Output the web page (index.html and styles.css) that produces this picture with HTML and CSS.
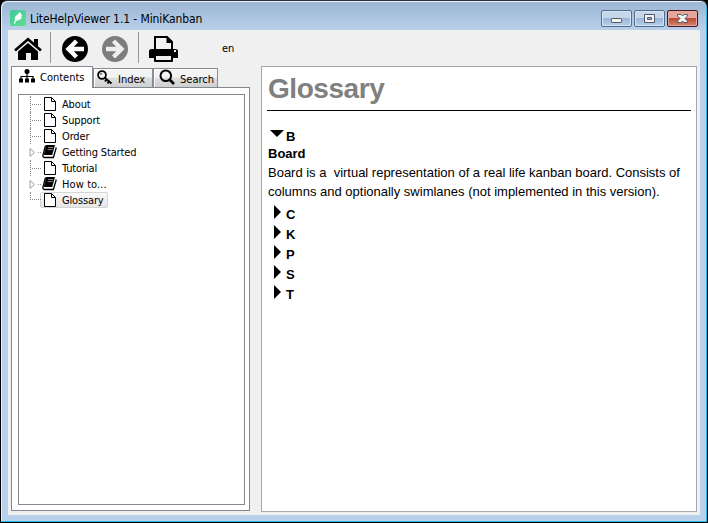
FILE: index.html
```html
<!DOCTYPE html>
<html lang="en">
<head>
<meta charset="utf-8">
<title>LiteHelpViewer 1.1 - MiniKanban</title>
<link rel="stylesheet" href="styles.css">
</head>
<body>
<svg class="defs" width="0" height="0" aria-hidden="true">
  <symbol id="page" viewBox="0 0 12 14"><path d="M.5 .5H7.5L11.5 4.5V13.5H.5Z" fill="#fff" stroke="#000"/><path d="M7.5 .5V4.5H11.5" fill="none" stroke="#000"/></symbol>
  <symbol id="book" viewBox="0 0 15 14"><path d="M4.2 0H13L10.2 10H1.8Z"/><path d="M3.5 .5L.8 10.8Q.8 12.5 2.5 12.5H11.4L14.3 2.5" fill="none" stroke="#000" stroke-width="1.3"/><path d="M6.2 2.5H11.2M5.6 4.6H10.6" stroke="#aaa" stroke-width=".8"/></symbol>
</svg>
<div class="window">
  <header class="titlebar">
    <svg class="logo" width="16" height="16" viewBox="0 0 16 16"><defs><linearGradient id="g" x2="1" y2="1"><stop stop-color="#43c6a0"/><stop offset="1" stop-color="#62df8c"/></linearGradient></defs><rect width="16" height="16" rx="2" fill="url(#g)"/><path d="M4 14L5 10Q4 7 7 5L10 2L11 4L12 5L11 7L12 8L9 10L6 11L5 14Z" fill="#fff"/></svg>
    <h1 class="title">LiteHelpViewer 1.1 - MiniKanban</h1>
    <div class="controls">
      <button class="control"><svg width="29" height="15" viewBox="0 0 29 15"><rect x="9.5" y="7.5" width="10" height="4" rx=".7" fill="#f4f4f4" stroke="#535666"/></svg></button>
      <button class="control"><svg width="29" height="15" viewBox="0 0 29 15"><path d="M9.5 3.5H19.5V11.5H9.5ZM12.5 6.5V8.5H16.5V6.5Z" fill="#f4f4f4" fill-rule="evenodd" stroke="#535666"/></svg></button>
      <button class="control close"><svg width="29" height="15" viewBox="0 0 29 15"><path d="M9.5 3.5H13L14.5 5L16 3.5H19.5V5L17 7.5L19.5 10V11.5H16L14.5 10L13 11.5H9.5V10L12 7.5L9.5 5Z" fill="#f4f4f4" stroke="#535666"/></svg></button>
    </div>
  </header>
  <main class="client">
    <nav class="toolbar">
      <svg class="home" width="28" height="24" viewBox="0 0 28 24"><path d="M1 13.5L14 2.2L27 13.5" fill="none" stroke="#000" stroke-width="2.6"/><path d="M20 2H24V10L20 7ZM4 14.5L14 6L24 14.5V23H17V16H12V23H4Z"/></svg>
      <i class="divider"></i>
      <svg class="back" width="26" height="26" viewBox="0 0 26 26"><circle cx="13" cy="13" r="13"/><path d="M14.5 5L6.5 13L14.5 21M7 13H22" fill="none" stroke="#fff" stroke-width="4.4"/></svg>
      <svg class="forward" width="26" height="26" viewBox="0 0 26 26"><circle cx="13" cy="13" r="13" fill="#7d7d7d"/><path d="M11.5 5L19.5 13L11.5 21M19 13H4" fill="none" stroke="#eee" stroke-width="4.4"/></svg>
      <i class="divider second"></i>
      <svg class="print" width="29" height="26" viewBox="0 0 29 26"><path d="M6 14V1H18L23 6V14" fill="#f3f3f3" stroke="#000" stroke-width="2"/><path d="M17.5 1H19L24 6V7H17.5Z"/><path d="M0 15Q0 13 3 13H26Q29 13 29 15V22H24V25Q24 26 23 26H6Q5 26 5 25V22H0Z"/><path d="M7 20H22V24H7Z" fill="#eee"/><rect x="25" y="14" width="2" height="2" fill="#eee"/></svg>
      <span class="lang">en</span>
    </nav>
    <div class="columns">
      <aside class="sidebar">
        <div class="tabs">
          <div class="tab active"><svg width="16" height="14" viewBox="0 0 16 14"><circle cx="8" cy="2.5" r="2.5"/><path d="M0 9.5H4V13.5H0ZM6 9.5H10V13.5H6ZM12 9.5H16V13.5H12Z"/><path d="M8 4V10M2 10V7.5H14V10" fill="none" stroke="#000" stroke-width="1.2"/></svg><span>Contents</span></div>
          <div class="tab index"><svg width="16" height="15" viewBox="0 0 16 15"><circle cx="5" cy="5" r="3.9" fill="none" stroke="#000" stroke-width="1.8"/><circle cx="4" cy="4" r=".8"/><path d="M7.5 7.5L14.5 13.5M9.5 9.5L8 11.5M12 11.5L10.5 13.5" fill="none" stroke="#000" stroke-width="1.9"/></svg><span>Index</span></div>
          <div class="tab search"><svg width="16" height="16" viewBox="0 0 16 16"><circle cx="6.8" cy="6.8" r="5.3" fill="none" stroke="#000" stroke-width="2"/><path d="M10.5 10.5L15 15" stroke="#000" stroke-width="2.6"/></svg><span>Search</span></div>
        </div>
        <div class="panel">
          <ul class="tree">
            <li><i class="branch"></i><span class="node"><svg class="page"><use href="#page"/></svg><span>About</span></span></li>
            <li><i class="branch"></i><span class="node"><svg class="page"><use href="#page"/></svg><span>Support</span></span></li>
            <li><i class="branch"></i><span class="node"><svg class="page"><use href="#page"/></svg><span>Order</span></span></li>
            <li><svg class="expander" viewBox="0 0 12 16"><path d="M1 4.5L5.5 8.5L1 12.5Z" fill="#fff" stroke="#a0a0a0"/><path d="M9 8.5H12" stroke="#888" stroke-dasharray="1 1"/></svg><span class="node"><svg class="book"><use href="#book"/></svg><span>Getting Started</span></span></li>
            <li><i class="branch"></i><span class="node"><svg class="page"><use href="#page"/></svg><span>Tutorial</span></span></li>
            <li><svg class="expander" viewBox="0 0 12 16"><path d="M1 4.5L5.5 8.5L1 12.5Z" fill="#fff" stroke="#a0a0a0"/><path d="M9 8.5H12" stroke="#888" stroke-dasharray="1 1"/></svg><span class="node"><svg class="book"><use href="#book"/></svg><span class="howto">How to...</span></span></li>
            <li><i class="branch last"></i><span class="node selected"><svg class="page"><use href="#page"/></svg><span>Glossary</span></span></li>
          </ul>
        </div>
      </aside>
      <article class="document">
        <h2>Glossary</h2>
        <div class="letter open"><svg width="14" height="8" viewBox="0 0 14 8"><path d="M0 0H14L7 7Z"/></svg><b>B</b></div>
        <h3>Board</h3>
        <p><span class="line-one">Board is a &nbsp;virtual representation of a real life kanban board. Consists of</span><br><span class="line-two">columns and optionally swimlanes (not implemented in this version).</span></p>
        <div class="letters">
          <div class="letter"><svg width="7" height="14" viewBox="0 0 7 14"><path d="M0 0L7 7L0 14Z"/></svg><b>C</b></div>
          <div class="letter"><svg width="7" height="14" viewBox="0 0 7 14"><path d="M0 0L7 7L0 14Z"/></svg><b>K</b></div>
          <div class="letter"><svg width="7" height="14" viewBox="0 0 7 14"><path d="M0 0L7 7L0 14Z"/></svg><b>P</b></div>
          <div class="letter"><svg width="7" height="14" viewBox="0 0 7 14"><path d="M0 0L7 7L0 14Z"/></svg><b>S</b></div>
          <div class="letter"><svg width="7" height="14" viewBox="0 0 7 14"><path d="M0 0L7 7L0 14Z"/></svg><b>T</b></div>
        </div>
      </article>
    </div>
  </main>
</div>
</body>
</html>
```

FILE: styles.css
```css
* { box-sizing: border-box; }
body { margin: 0; background: #000; color: #000; font: 11px/16px "DejaVu Sans Condensed", "DejaVu Sans", sans-serif; overflow: hidden; }
svg { display: block; flex: none; }
.defs { position: absolute; }
.window { width: 708px; height: 523px; border: 1px solid #000; border-top-color: #302d36; border-radius: 7px 7px 0 0; background: linear-gradient(#9bb5d3, #b9d1ea 30px); padding: 0 6px 6px 7px; box-shadow: inset -1px -1px #25bce5, inset 1px 1px #e5f2fc; }
.titlebar { height: 29px; display: flex; padding-left: 2px; }
.logo { margin-top: 9px; }
.title { margin: 9px 0 0 4px; font-size: 12px; line-height: 18px; font-weight: 400; white-space: nowrap; letter-spacing: -.1px; }
.controls { display: flex; gap: 2px; margin: 9px 3px 0 auto; }
.control { width: 31px; height: 17px; padding: 0; border: 1px solid #566b88; border-radius: 2px; background: linear-gradient(#c5d8ea 0 45%, #9bb7d5 50%, #b5d0ea); box-shadow: inset 0 0 0 1px #d5e5f5; }
.control.close { border-color: #43161f; background: linear-gradient(#e4a69b 0 45%, #bd4a35 50%, #d18673); box-shadow: inset 0 0 0 1px #e7a99b; }
.client { width: 692px; height: 485px; background: #f0f0f0; }
.toolbar { height: 36px; display: flex; }
.home { margin: 7px 0 0 6px; }
.divider { width: 1px; height: 31px; margin: 2px 0 0 8px; background: #969696; }
.back { margin: 6px 0 0 11px; }
.forward { margin: 6px 0 0 14px; }
.second { margin-left: 10px; }
.print { margin: 6px 0 0 10px; }
.lang { margin: 11px 0 0 44px; }
.columns { display: flex; align-items: flex-start; height: 446px; gap: 11px; margin-left: 3px; }
.sidebar { width: 239px; height: 445px; }
.tabs { display: flex; align-items: flex-end; height: 21px; }
.tab { height: 19px; display: flex; align-items: center; border: 1px solid #898c95; border-bottom: 0; background: linear-gradient(#f3f3f3 0 45%, #dedede 50%, #d0d0d0); box-shadow: inset 1px 1px #fff; white-space: nowrap; }
.active { position: relative; width: 82px; height: 22px; margin-bottom: -1px; background: #fff; padding: 0 0 1px 7px; gap: 5px; }
.active svg { margin-top: -2px; }
.active span { padding-top: 1px; }
.index { width: 60px; padding-left: 3px; gap: 5px; }
.search { width: 65px; padding-left: 5px; gap: 5px; }
.index svg, .search svg { margin-top: -2px; }
.index span, .search span { padding-top: 3px; }
.panel { height: 424px; border: 1px solid #828790; background: #fff; padding: 6px 4px 6px 6px; }
.tree { list-style: none; height: 411px; margin: 0; padding: 1px 0 0 10px; border: 1px solid #828790; }
.tree li { display: flex; height: 16px; align-items: center; }
.tree span span { position: relative; top: 1px; letter-spacing: -.15px; }
.tree .howto { letter-spacing: .1px; }
.branch { position: relative; width: 10px; height: 16px; margin-left: 1px; border-left: 1px dotted #888; }
.branch::after { content: ""; position: absolute; left: 1px; top: 8px; width: 9px; border-top: 1px dotted #888; }
.branch.last { height: 8px; align-self: flex-start; }
.branch.last::after { top: 7px; }
.expander { width: 12px; height: 16px; margin-right: -1px; }
.node { display: flex; align-items: center; height: 16px; padding: 0 3px 0 2px; border: 1px solid transparent; white-space: nowrap; }
.page { width: 12px; height: 14px; margin: 0 6px 0 1px; }
.book { width: 15px; height: 14px; margin: 0 5px 0 -1px; }
.selected { border-color: #d5d5d5; border-radius: 2px; background: linear-gradient(#fafafa, #e5e5e5); }
.document { width: 436px; height: 446px; border: 1px solid #a7a9af; background: #fff; padding: 6px 5px; font: 13px/20px "Liberation Sans", Arial, sans-serif; }
h2 { height: 38px; margin: 0; padding-left: 1px; border-bottom: 1px solid #000; color: #808080; font: 700 28px/31px "Liberation Sans", Arial, sans-serif; letter-spacing: -.45px; }
.letter { display: flex; align-items: center; height: 20px; padding-left: 7px; gap: 5px; }
.letter svg { margin-top: -2px; }
.letter b { padding-top: 3px; line-height: 17px; }
.open { margin-top: 14px; padding-left: 3px; gap: 2px; }
h3 { margin: 0 0 0 1px; height: 18px; font-size: 13px; line-height: 17px; }
p { margin: 0 0 0 1px; line-height: 19px; white-space: nowrap; }
.line-one { letter-spacing: -.01px; }
.letters { margin-top: 2px; }
```
